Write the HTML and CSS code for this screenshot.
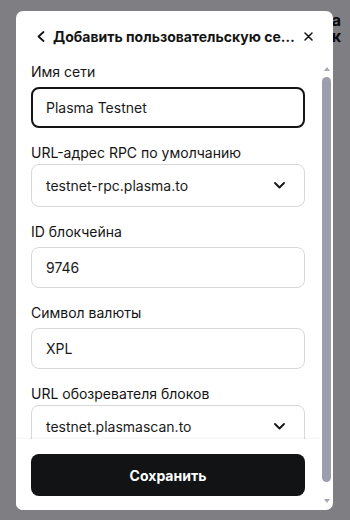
FILE: index.html
```html
<!DOCTYPE html>
<html lang="ru">
<head>
<meta charset="UTF-8">
<title>Добавить пользовательскую сеть</title>
<link rel="stylesheet" href="styles.css">
</head>
<body>

<div class="page">
  <p class="page-title">Plasma</p>
  <p class="page-sub">Кошелек</p>
</div>

<div class="overlay">
  <div class="modal">
    <div class="modal-header">
      <button type="button" class="icon-btn back-btn">
        <svg width="8" height="11" viewBox="0 0 8 11"><path d="M6.5 1 L1.5 5.5 L6.5 10" fill="none" stroke="#141414" stroke-width="1.8" stroke-linecap="round" stroke-linejoin="round"/></svg>
      </button>
      <h2 class="modal-title">Добавить пользовательскую сеть</h2>
      <button type="button" class="icon-btn close-btn">
        <svg width="9" height="9" viewBox="0 0 9 9"><path d="M1 1 L8 8 M8 1 L1 8" fill="none" stroke="#141414" stroke-width="1.5" stroke-linecap="round"/></svg>
      </button>
    </div>

    <div class="modal-body">
      <div class="scroll-area">
        <div class="fields">
          <div class="field">
            <label for="netName">Имя сети</label>
            <input type="text" id="netName" class="text-input focused" value="Plasma Testnet">
          </div>
          <div class="field">
            <label class="select-label">URL-адрес RPC по умолчанию</label>
            <div class="select">
              <span>testnet-rpc.plasma.to</span>
              <svg width="11" height="7" viewBox="0 0 11 7"><path d="M1 1 L5.5 5.5 L10 1" fill="none" stroke="#141414" stroke-width="1.8" stroke-linecap="round" stroke-linejoin="round"/></svg>
            </div>
          </div>
          <div class="field">
            <label for="chainId">ID блокчейна</label>
            <input type="text" id="chainId" class="text-input" value="9746">
          </div>
          <div class="field">
            <label for="symbol">Символ валюты</label>
            <input type="text" id="symbol" class="text-input" value="XPL">
          </div>
          <div class="field">
            <label class="select-label">URL обозревателя блоков</label>
            <div class="select">
              <span>testnet.plasmascan.to</span>
              <svg width="11" height="7" viewBox="0 0 11 7"><path d="M1 1 L5.5 5.5 L10 1" fill="none" stroke="#141414" stroke-width="1.8" stroke-linecap="round" stroke-linejoin="round"/></svg>
            </div>
          </div>
        </div>

        <div class="modal-footer">
          <button type="button" class="save-btn">Сохранить</button>
        </div>
      </div>

      <div class="scrollbar">
        <div class="arrow-up"></div>
        <div class="thumb"></div>
        <div class="arrow-down"></div>
      </div>
    </div>
  </div>
</div>

</body>
</html>
```

FILE: styles.css
```css
* {
  box-sizing: border-box;
  margin: 0px;
  padding: 0px;
}

body {
  width: 350px;
  height: 520px;
  overflow: hidden;
  background-color: #fbfbfc;
  font-family: Inter, "Noto Sans", sans-serif;
  color: #141414;
}

.page {
  padding: 12px 9px 0 0;
  text-align: right;
  font-weight: 700;
  font-size: 16px;
  line-height: 16px;
  color: #111;
}

.overlay {
  position: fixed;
  top: 0;
  left: 0;
  right: 0;
  bottom: 0;
  display: flex;
  padding: 11px 17px 10px 16px;
  background-color: rgba(3, 4, 10, 0.5);
}

.modal {
  flex: 1;
  display: flex;
  flex-direction: column;
  overflow: hidden;
  background-color: #fff;
  border-radius: 7px;
}

/* header */
.modal-header {
  height: 51px;
  flex-shrink: 0;
  display: flex;
  align-items: center;
  gap: 8px;
  padding: 0 20px 0 21px;
}

.icon-btn {
  border: none;
  background: none;
  display: flex;
  align-items: center;
  justify-content: center;
  cursor: pointer;
}

.modal-title {
  flex: 1;
  min-width: 0;
  font-size: 14px;
  font-weight: 700;
  line-height: 20px;
  white-space: nowrap;
  overflow: hidden;
  text-overflow: ellipsis;
}

/* body */
.modal-body {
  flex: 1;
  min-height: 0;
  display: flex;
}

.scroll-area {
  flex: 1;
  min-width: 0;
  display: flex;
  flex-direction: column;
  overflow: hidden;
}

.fields {
  flex: 1;
  min-height: 0;
  overflow: hidden;
  padding: 0 16px 0 15px;
}

.field {
  margin-bottom: 15px;
}

.field label {
  display: block;
  font-size: 14px;
  line-height: 20px;
  margin-bottom: 5px;
  color: #141414;
}

.field .select-label {
  margin-bottom: 1px;
}

.text-input {
  display: block;
  width: 100%;
  height: 41px;
  padding: 0 14px;
  border: 1px solid #d7d8dc;
  border-radius: 8px;
  font-family: inherit;
  font-size: 14px;
  color: #1a1a1a;
  outline: none;
}

.text-input.focused {
  border: 2px solid #141414;
  padding: 0 13px;
}

.select {
  display: flex;
  align-items: center;
  justify-content: space-between;
  height: 43px;
  padding: 0 19px 0 14px;
  border: 1px solid #d7d8dc;
  border-radius: 8px;
  font-size: 14px;
  color: #1a1a1a;
}

/* footer */
.modal-footer {
  flex-shrink: 0;
  padding: 15px 16px 14px 15px;
  background-color: #fff;
  box-shadow: 0 -1px 3px rgba(0, 0, 0, 0.05);
}

.save-btn {
  display: block;
  width: 100%;
  height: 42px;
  border: none;
  border-radius: 8px;
  background-color: #121314;
  color: #fff;
  font-family: inherit;
  font-size: 14px;
  font-weight: 700;
  cursor: pointer;
}

/* scrollbar */
.scrollbar {
  width: 12px;
  flex-shrink: 0;
  display: flex;
  flex-direction: column;
  align-items: center;
  padding: 5px 1px 7px 0;
}

.arrow-up,
.arrow-down {
  width: 0;
  height: 0;
  border-left: 3.5px solid transparent;
  border-right: 3.5px solid transparent;
}

.arrow-up {
  border-bottom: 4px solid #a5a7b2;
  margin-bottom: 6px;
}

.arrow-down {
  border-top: 4px solid #a5a7b2;
  margin-top: 17px;
}

.thumb {
  flex: 1;
  width: 9px;
  border-radius: 5px;
  background-color: #9c9eab;
}
```
